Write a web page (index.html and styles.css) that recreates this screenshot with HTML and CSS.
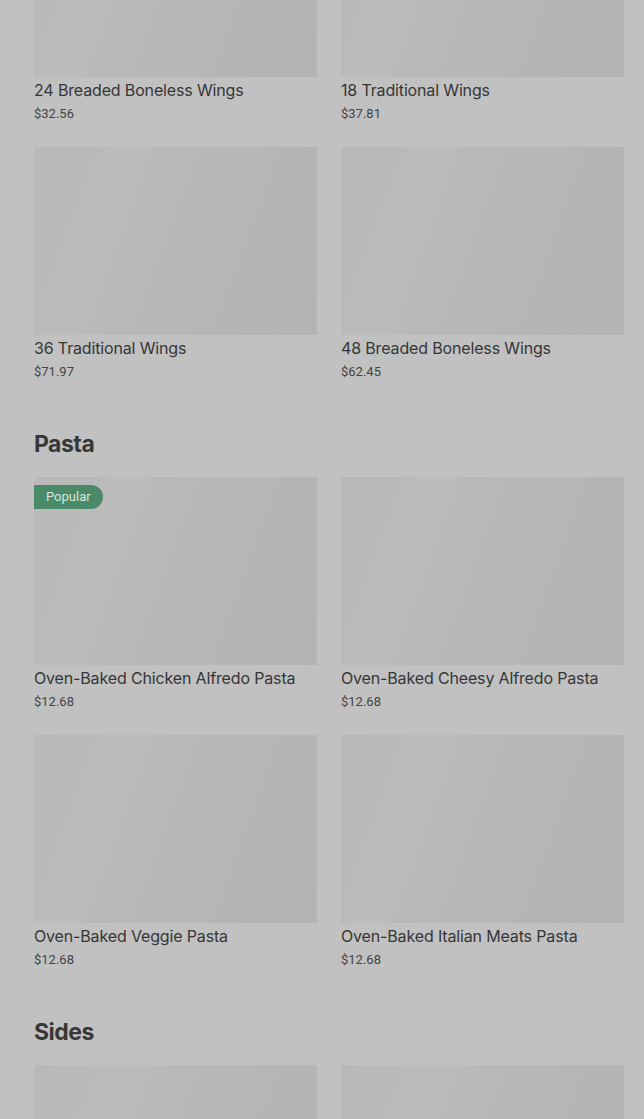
FILE: index.html
```html
<!DOCTYPE html>
<html lang="en">
<head>
    <meta charset="UTF-8"><title>Menu</title>
    <link rel="stylesheet" href="styles.css">
</head>
<body>
<div class="menuWrapper">
    <div class="itemGrid scrolledGrid">
        <div class="item">
            <div class="itemImage"></div>
            <div class="itemTitle">24 Breaded Boneless Wings</div>
            <div class="itemPrice">$32.56</div>
        </div>
        <div class="item">
            <div class="itemImage"></div>
            <div class="itemTitle">18 Traditional Wings</div>
            <div class="itemPrice">$37.81</div>
        </div>
        <div class="item">
            <div class="itemImage"></div>
            <div class="itemTitle">36 Traditional Wings</div>
            <div class="itemPrice">$71.97</div>
        </div>
        <div class="item">
            <div class="itemImage"></div>
            <div class="itemTitle">48 Breaded Boneless Wings</div>
            <div class="itemPrice">$62.45</div>
        </div>
    </div>

    <div class="sectionTitle">Pasta</div>
    <div class="itemGrid">
        <div class="item">
            <div class="itemImage">
                <div class="badge">Popular</div>
            </div>
            <div class="itemTitle">Oven-Baked Chicken Alfredo Pasta</div>
            <div class="itemPrice">$12.68</div>
        </div>
        <div class="item">
            <div class="itemImage"></div>
            <div class="itemTitle">Oven-Baked Cheesy Alfredo Pasta</div>
            <div class="itemPrice">$12.68</div>
        </div>
        <div class="item">
            <div class="itemImage"></div>
            <div class="itemTitle">Oven-Baked Veggie Pasta</div>
            <div class="itemPrice">$12.68</div>
        </div>
        <div class="item">
            <div class="itemImage"></div>
            <div class="itemTitle">Oven-Baked Italian Meats Pasta</div>
            <div class="itemPrice">$12.68</div>
        </div>
    </div>

    <div class="sectionTitle">Sides</div>
    <div class="itemGrid">
        <div class="item">
            <div class="itemImage"></div>
        </div>
        <div class="item">
            <div class="itemImage"></div>
        </div>
    </div>
</div>
</body>
</html>
```

FILE: styles.css
```css
html {
    font-family: Roboto, "Liberation Sans", sans-serif;
    background-color: #c1c1c1;
}
body {
    margin: 0;
    height: 1119px;
    overflow: hidden;
}
.menuWrapper {
    display: flex;
    flex-direction: column;
    padding: 0 20px 0 34px;
}
.itemGrid {
    display: grid;
    grid-template-columns: 1fr 1fr;
    column-gap: 24px;
    row-gap: 23px;
}
/* page is scrolled down, first row is cut off */
.scrolledGrid {
    margin-top: -111px;
}
.item {
    display: flex;
    flex-direction: column;
}
.itemImage {
    position: relative;
    height: 188px;
    background: linear-gradient(110deg, #b9b9b9 0%, #bbbbbb 30%, #b7b7b7 50%, #b4b4b4 100%);
}
.itemTitle {
    margin-top: 2px;
    font-family: Inter, Roboto, sans-serif;
    font-size: 16px;
    line-height: 22px;
    letter-spacing: -0.15px;
    color: #363636;
    white-space: nowrap;
}
.itemPrice {
    margin-top: 3px;
    font-size: 13px;
    line-height: 20px;
    color: #444444;
}
.sectionTitle {
    margin: 46px 0 17px;
    font-family: Inter, Roboto, sans-serif;
    font-weight: 700;
    font-size: 23px;
    line-height: 32px;
    letter-spacing: -0.5px;
    color: #373737;
}
.badge {
    position: absolute;
    top: 8px;
    left: 0;
    height: 24px;
    padding: 0 12px;
    border-radius: 0 12px 12px 0;
    background-color: #4b8a68;
    color: #d5e6db;
    font-size: 13px;
    line-height: 24px;
}
```
